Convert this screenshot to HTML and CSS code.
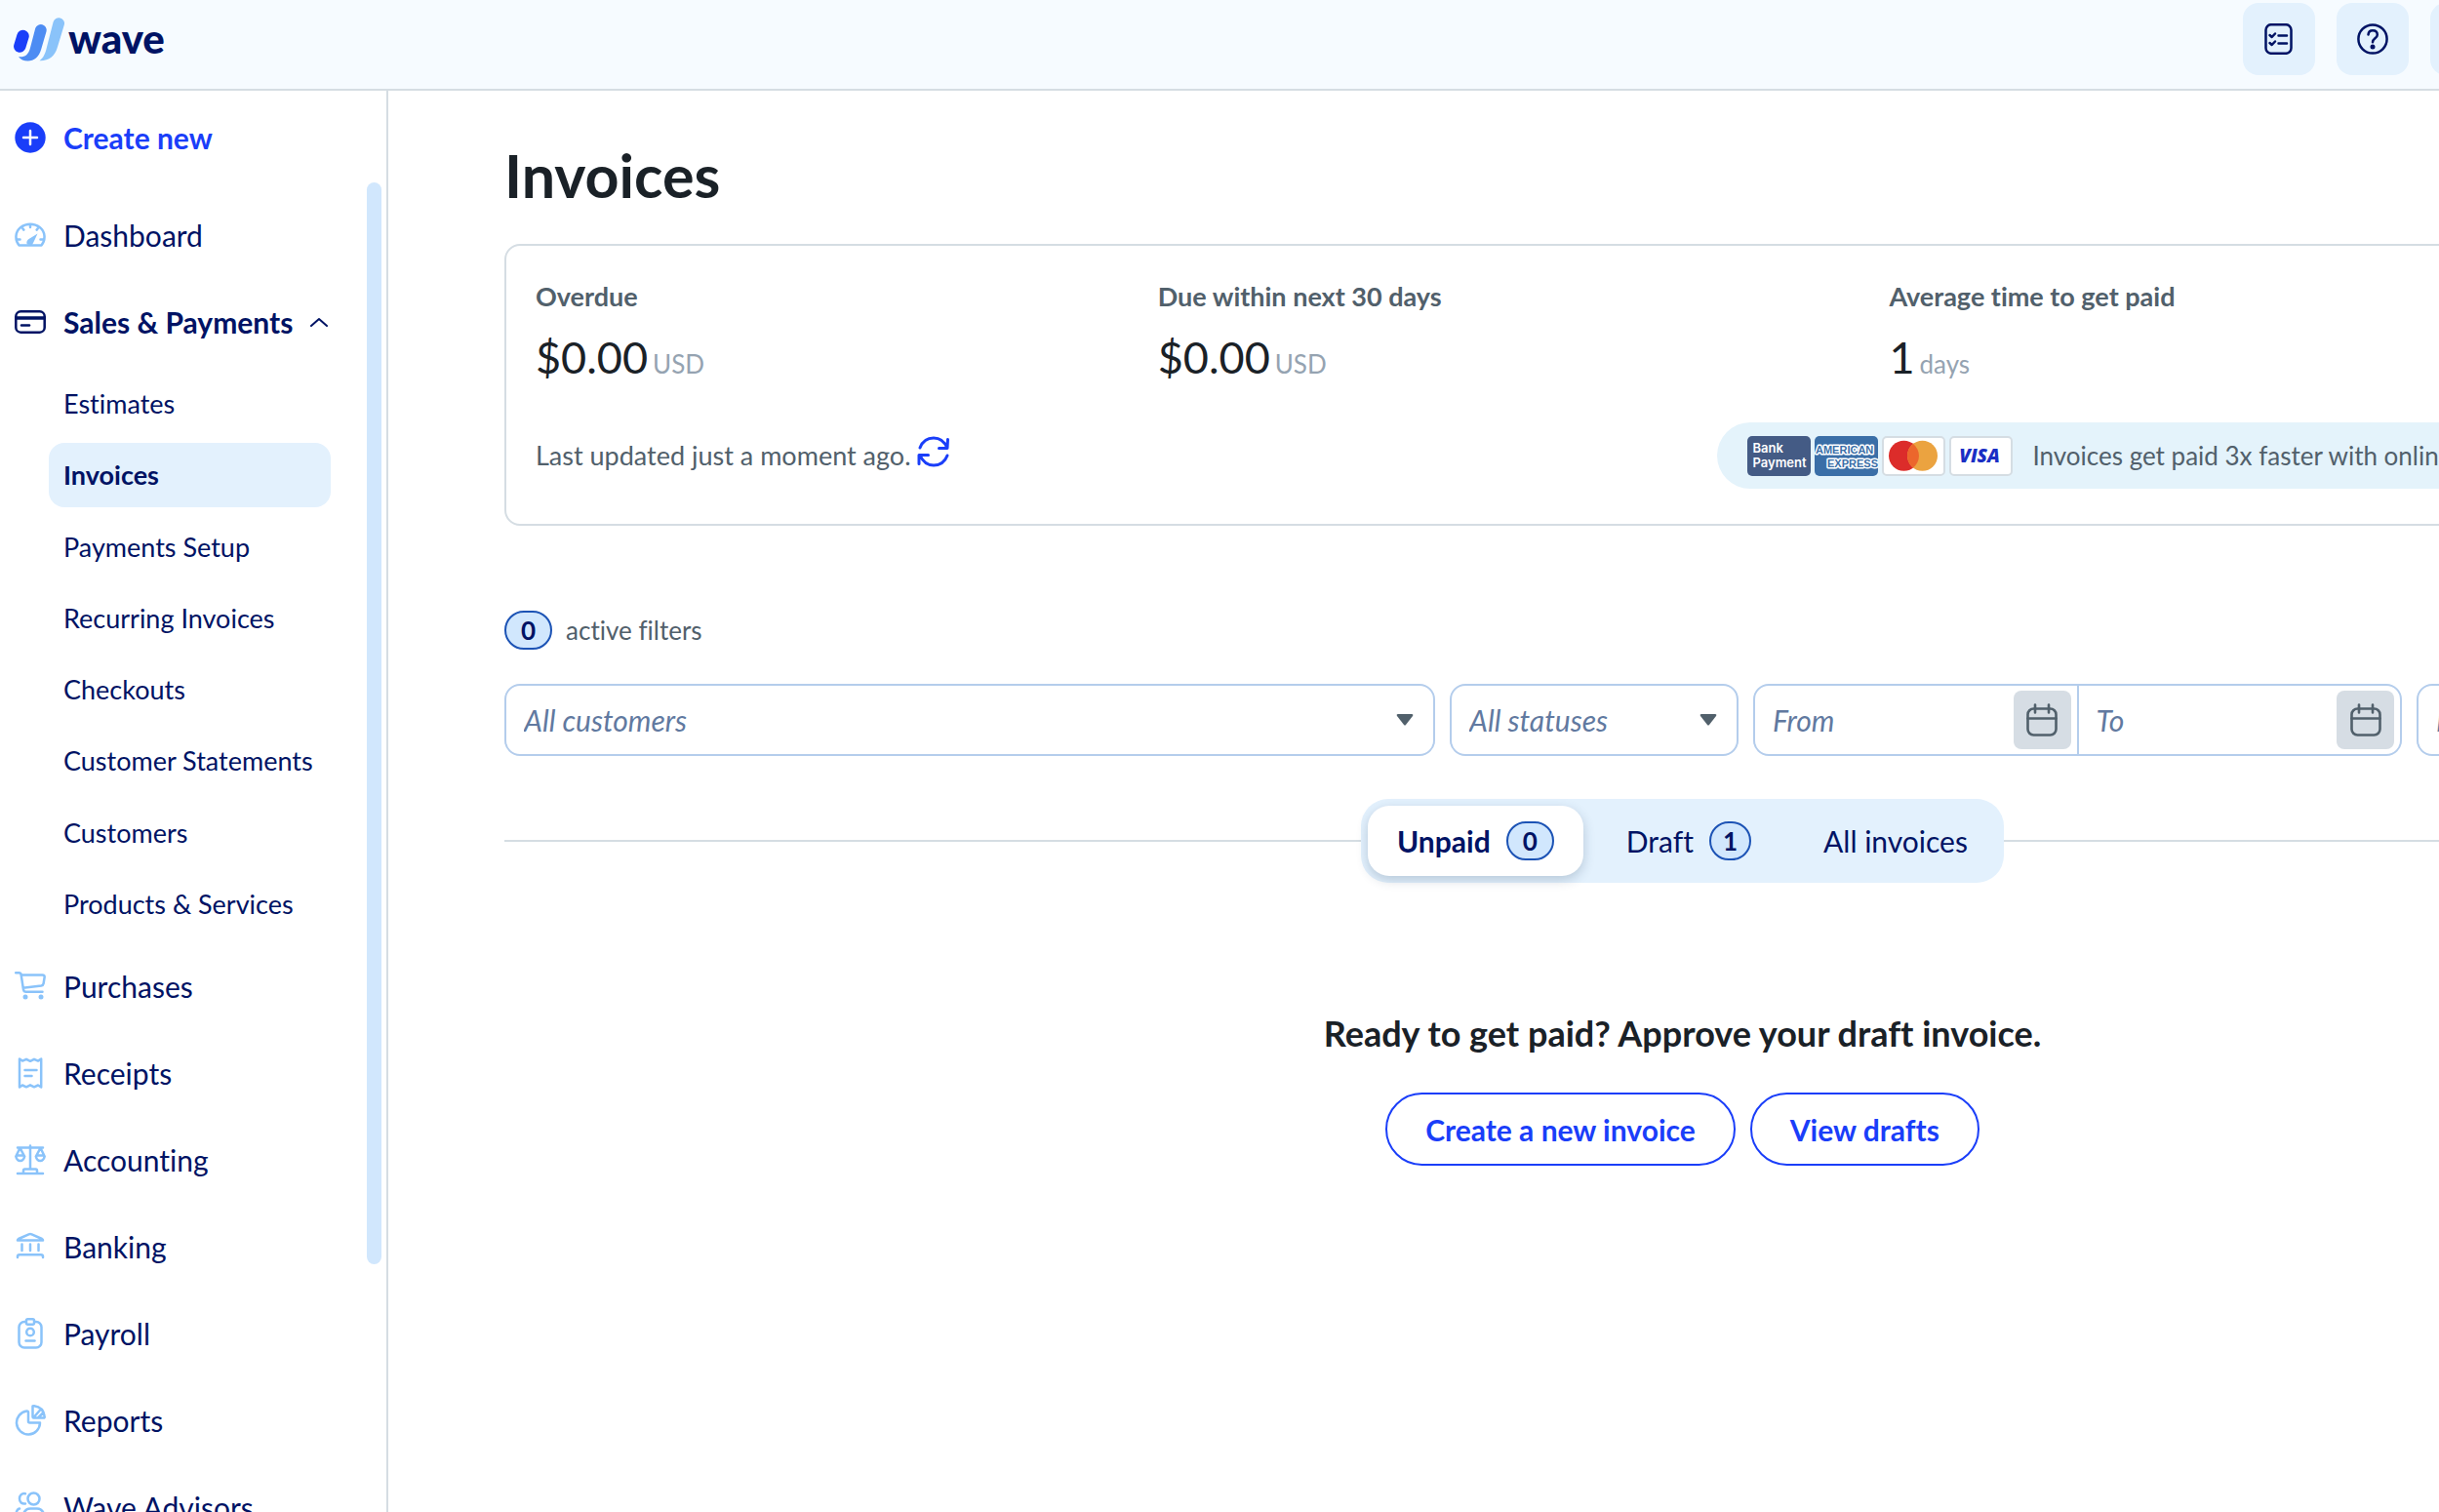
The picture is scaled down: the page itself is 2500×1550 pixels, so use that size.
FILE: index.html
```html
<!DOCTYPE html>
<html lang="en">
<head>
<meta charset="utf-8">
<meta name="viewport" content="width=device-width, initial-scale=1">
<title>Invoices - Wave</title>
<link rel="stylesheet" href="styles.css">
</head>
<body>
<div class="app">
  <header class="topbar">
    <a class="brand" href="#">
      <svg class="brand-mark" viewBox="0 0 54 46" aria-hidden="true">
        <path d="M9.500 20L6.300 30.500" stroke="#1a3ef9" stroke-width="12.500" stroke-linecap="round" fill="none"/>
        <path d="M22.300 11.800a5.900 5.900 0 0 1 11.300 3.200L28.200 33.500C26 41.500 21 45.500 14.500 45.500C10.500 45.500 7 44 5 41.200C11 42 15.200 39.500 17 32Z" fill="#4d8cf3"/>
        <path d="M40.600 5.400a5.800 5.800 0 0 1 11.200 3.200L45 31C42.200 41 36 45.500 26.500 45.200C30.500 42.500 32.400 38 33.800 32Z" fill="#8ac3fa"/>
      </svg>
      <span class="brand-name">wave</span>
    </a>
    <div class="top-actions">
      <button class="top-button" type="button" aria-label="Checklist">
        <svg viewBox="0 0 32 32" aria-hidden="true"><rect x="2.500" y="1.200" width="26" height="29.600" rx="5.500"/><path d="M6.500 12l2.200 2L12 10.500M15.500 12.500H24M6.500 20l2.200 2L12 18.500M15.500 20.500H24"/></svg>
      </button>
      <button class="top-button" type="button" aria-label="Help">
        <svg viewBox="0 0 32 32" aria-hidden="true"><circle cx="16" cy="16" r="14.600"/><path d="M11.500 11.500C11.800 8.700 13.600 7.300 16 7.300C18.900 7.300 20.800 9 20.800 11.700C20.800 15.200 16 15.500 16 19.200"/><circle class="dot" cx="16" cy="24" r="2.500"/></svg>
      </button>
      <button class="top-button" type="button" aria-label="Notifications"></button>
    </div>
  </header>

  <div class="body">
    <nav class="sidebar" aria-label="Main">
      <button class="nav-row create" type="button">
        <svg viewBox="0 0 32 32" aria-hidden="true"><circle cx="16" cy="16" r="15.700" fill="#1a3ef9" stroke="none"/><path d="M16 9v14M9 16h14" stroke="#fff"/></svg>
        <span>Create new</span>
      </button>
      <div class="nav-scroll">
        <div class="nav-list">
          <a class="nav-row" href="#">
            <svg viewBox="0 0 32 32" aria-hidden="true"><path d="M4.500 26.500C0 21 0.500 12.500 6 8.300C12 3.700 20 3.700 26 8.300C31.500 12.500 32 21 27.500 26.500Z"/><path d="M16 5.500v2.500M8.200 9.200l1.200 1.400M23.800 9.200l-1.200 1.400M3 20.500h2.500M29 20.500h-2.500"/><path class="solid" d="M13 25.500C11.500 23 13 21 15 19.700L23.500 14.500L19.300 23.500C18.500 25 18 26 17.500 26.500Z"/></svg>
            <span>Dashboard</span>
          </a>
          <a class="nav-row current" href="#" aria-expanded="true">
            <svg viewBox="0 0 32 32" aria-hidden="true"><rect x="1.300" y="5.300" width="29.400" height="21.400" rx="5"/><path d="M1.500 12h29" stroke-width="3.500"/><path d="M7 19.500h8"/></svg>
            <span>Sales &amp; Payments</span>
            <svg class="caret" viewBox="0 0 18 10" aria-hidden="true"><path d="M1 9L9 2l8 7"/></svg>
          </a>
          <ul class="subnav">
            <li><a href="#">Estimates</a></li>
            <li><a class="selected" href="#" aria-current="page">Invoices</a></li>
            <li><a href="#">Payments Setup</a></li>
            <li><a href="#">Recurring Invoices</a></li>
            <li><a href="#">Checkouts</a></li>
            <li><a href="#">Customer Statements</a></li>
            <li><a href="#">Customers</a></li>
            <li><a href="#">Products &amp; Services</a></li>
          </ul>
          <a class="nav-row" href="#">
            <svg viewBox="0 0 32 32" aria-hidden="true"><path d="M1.200 2.200H4.500Q6.300 2.200 6.600 4L9 19.500Q9.400 21.800 11.500 21.800H28.500M6.800 4.500H28.500Q31 4.500 30.600 7L29.600 13.300Q29.300 15.200 27.300 15.500L8.600 17.700"/><circle class="dot" cx="11" cy="27" r="2.500"/><circle class="dot" cx="27" cy="27" r="2.500"/></svg>
            <span>Purchases</span>
          </a>
          <a class="nav-row" href="#">
            <svg viewBox="0 0 32 32" aria-hidden="true"><path d="M5 1.500V30.500L8 28.500L12 30.300L16 28.300L20 30.300L24 28.500L27.200 30.500V1.500L24 3.600L20 1.800L16 3.800L12 1.800L8 3.600ZM10.500 13h12M10.500 19h7"/></svg>
            <span>Receipts</span>
          </a>
          <a class="nav-row" href="#">
            <svg viewBox="0 0 32 32" aria-hidden="true"><path d="M16 1.500V25M3 3.500H29M3 30H29M9 29.500V27Q9 25.500 10.500 25.500H21.500Q23 25.500 23 27V29.500M5.500 3.800L1.300 12.500C2 15.500 3.500 17 5.700 17S9.500 15.500 10.200 12.500ZM2 11.500h7.500M26.500 3.800L21.800 12.500C22.500 15.500 24 17 26.200 17S30 15.500 30.700 12.500ZM22.500 11.500h7.500"/></svg>
            <span>Accounting</span>
          </a>
          <a class="nav-row" href="#">
            <svg viewBox="0 0 32 32" aria-hidden="true"><path d="M3 9.500Q3 8.500 4 8L14.500 3.300Q16 2.700 17.500 3.300L28 8Q29 8.500 29 9.500ZM7.500 13.500V20M16 13.500V20M24.500 13.500V20M3 27V26Q3 24.300 5 24.300H27Q29 24.300 29 26V27"/></svg>
            <span>Banking</span>
          </a>
          <a class="nav-row" href="#">
            <svg viewBox="0 0 32 32" aria-hidden="true"><rect x="4.500" y="4" width="23" height="26.500" rx="5.500"/><rect class="blank" x="12" y="1.300" width="8" height="5.500" rx="1.500"/><circle cx="16" cy="14.500" r="3.800"/><path d="M11.500 23.500h9"/></svg>
            <span>Payroll</span>
          </a>
          <a class="nav-row" href="#">
            <svg viewBox="0 0 32 32" aria-hidden="true"><path d="M12.500 6.500A12 12 0 1 0 26 18.500H15.500Q14 18.500 14 17V7.800Q14 6.500 12.500 6.500ZM18.500 1.500V12.500Q18.500 13.500 19.500 13.500H29.500Q31 13.500 30.700 12C29.800 6 26 2 20 1.300Q18.500 1.200 18.500 2.500M20 12.500L26.500 5M24.500 13l4.500-4.500"/></svg>
            <span>Reports</span>
          </a>
          <a class="nav-row" href="#">
            <svg viewBox="0 0 32 32" aria-hidden="true"><circle cx="19.500" cy="7.500" r="6"/><path d="M11 2.200C7.500 1.300 5 4 5 7.500S7.500 13 11 12.500M8 31C8 22 11 17.500 16 17.500H23C28 17.500 31 22 31 31ZM1.300 26C1.300 21 2.500 18 5 17.500"/></svg>
            <span>Wave Advisors</span>
          </a>
        </div>
        <div class="scroll-thumb"></div>
      </div>
    </nav>

    <main class="content">
      <h1>Invoices</h1>

      <section class="summary" aria-label="Summary">
        <dl class="stats">
          <div><dt>Overdue</dt><dd>$0.00 <small>USD</small></dd></div>
          <div><dt>Due within next 30 days</dt><dd>$0.00 <small>USD</small></dd></div>
          <div><dt>Average time to get paid</dt><dd>1 <small>days</small></dd></div>
        </dl>
        <div class="summary-foot">
          <div class="updated">
            <span>Last updated just a moment ago.</span>
            <button class="refresh" type="button" aria-label="Refresh">
              <svg viewBox="0 0 34 32" aria-hidden="true"><path d="M3 12C5.500 5.500 10.500 2 17 2C23.500 2 28 5.500 30.800 12M31.500 3.500L31 12.500H22.500M31 20C28.500 26.500 23.500 30 17 30C10.500 30 6 26.500 3.200 20M2 28.500V19.500H11.500"/></svg>
            </button>
          </div>
          <div class="promo">
            <div class="methods">
              <span class="method bank">Bank<br>Payment</span>
              <svg class="method amex" viewBox="0 0 65 41" role="img" aria-label="American Express"><text x="1" y="18">AMERICAN</text><text x="13" y="32">EXPRESS</text></svg>
              <svg class="method plain" viewBox="2 2 61 37" role="img" aria-label="Mastercard"><circle cx="22.500" cy="20.300" r="15.500" fill="#dc2c2a"/><circle cx="41.500" cy="20.300" r="15.500" fill="#eba340"/><path d="M32 8.100a15.500 15.500 0 0 1 0 24.400a15.500 15.500 0 0 1 0-24.400" fill="#ec662c"/></svg>
              <svg class="method plain visa" viewBox="2 2 61 37" role="img" aria-label="Visa"><text x="31" y="27" text-anchor="middle">VISA</text></svg>
            </div>
            <span class="promo-text">Invoices get paid 3x faster with online payments</span>
          </div>
        </div>
      </section>

      <div class="active-filters"><span class="badge">0</span><span>active filters</span></div>

      <form class="filters">
        <select class="field customers" aria-label="Customer"><option>All customers</option></select>
        <select class="field statuses" aria-label="Status"><option>All statuses</option></select>
        <div class="field dates">
          <div class="date"><input type="text" placeholder="From" aria-label="From"><button type="button" aria-label="Pick start date"><svg viewBox="0 0 32 34" aria-hidden="true"><rect x="1.500" y="5.500" width="29" height="27" rx="6"/><path d="M1.500 15.500h29M9 1.500v8M23 1.500v8"/></svg></button></div>
          <div class="date"><input type="text" placeholder="To" aria-label="To"><button type="button" aria-label="Pick end date"><svg viewBox="0 0 32 34" aria-hidden="true"><rect x="1.500" y="5.500" width="29" height="27" rx="6"/><path d="M1.500 15.500h29M9 1.500v8M23 1.500v8"/></svg></button></div>
        </div>
        <input class="field search" type="text" placeholder="Enter invoice #" aria-label="Invoice number">
      </form>

      <div class="tab-row">
        <div class="tabs" role="tablist">
          <button class="tab active" type="button" role="tab" aria-selected="true">Unpaid <span class="badge">0</span></button>
          <button class="tab" type="button" role="tab" aria-selected="false">Draft <span class="badge narrow">1</span></button>
          <button class="tab" type="button" role="tab" aria-selected="false">All invoices</button>
        </div>
      </div>

      <section class="empty">
        <h2>Ready to get paid? Approve your draft invoice.</h2>
        <div class="empty-actions">
          <button class="outline" type="button">Create a new invoice</button>
          <button class="outline" type="button">View drafts</button>
        </div>
      </section>
    </main>
  </div>
</div>
</body>
</html>
```
FILE: styles.css
```css
:root {
  --navy: #001364;
  --blue: #1a3ef9;
  --sky: #8ac3fa;
  --pale: #e3f1fd;
  --badge: #d1e7fd;
  --line: #d5dde3;
  --field: #b4cdec;
  --ink: #1a2127;
  --slate: #51606b;
}

* { box-sizing: border-box; }

body {
  margin: 0;
  background: #fff;
  color: var(--navy);
  font: 30px/40px Lato, "Noto Sans", sans-serif;
  font-variant-ligatures: none;
}

button, input, select { font: inherit; color: inherit; margin: 0; }
button { border: 0; padding: 0; background: none; cursor: pointer; }
a { color: inherit; text-decoration: none; }
svg { fill: none; stroke-linecap: round; stroke-linejoin: round; }

.app {
  height: 100vh;
  display: flex;
  flex-direction: column;
  overflow: hidden;
}

/* Top bar */
.topbar {
  flex: none;
  display: flex;
  align-items: center;
  justify-content: space-between;
  padding: 3px 0 14px 14px;
  margin-right: -65px;
  background: #f6fbff;
  border-bottom: 2px solid var(--line);
}
.brand { display: flex; align-items: flex-start; gap: 2px; }
.brand-mark { width: 54px; height: 46px; }
.brand-name { font-size: 42px; line-height: 44px; font-weight: 900; }
.top-actions { display: flex; gap: 22px; }
.top-button {
  display: grid;
  place-items: center;
  width: 74px;
  height: 74px;
  border-radius: 16px;
  background: var(--pale);
}
.top-button svg { width: 32px; height: 32px; stroke: var(--navy); stroke-width: 2.500; }
.dot { fill: var(--navy); stroke: none; }

.body { flex: 1; min-height: 0; display: flex; }

/* Sidebar */
.sidebar {
  flex: none;
  width: 398px;
  display: flex;
  flex-direction: column;
  border-right: 2px solid var(--line);
}
.nav-row {
  flex: none;
  display: flex;
  align-items: center;
  gap: 18px;
  height: 89px;
  padding-left: 15px;
  text-align: left;
}
.nav-row svg { width: 32px; height: 32px; stroke: var(--sky); stroke-width: 2.500; }
.nav-row .dot, .nav-row .solid { fill: var(--sky); stroke: none; }
.nav-row .blank { fill: #fff; }
.create { height: 94px; padding-top: 2px; color: var(--blue); font-weight: 700; }
.current { font-weight: 700; }
.nav-row.current svg { stroke: var(--navy); }
.nav-row .caret { width: 18px; height: 10px; stroke-width: 2; }
.nav-scroll { flex: 1; min-height: 0; display: flex; gap: 37px; padding-right: 5px; }
.nav-list { flex: 1; padding-top: 9px; overflow: hidden; }
.scroll-thumb {
  width: 15px;
  margin-bottom: 254px;
  border-radius: 8px;
  background: var(--badge);
}
.subnav {
  display: flex;
  flex-direction: column;
  justify-content: space-between;
  height: 579px;
  margin: 7px 0 6px;
  padding: 0 0 0 50px;
  list-style: none;
}
.subnav a {
  display: block;
  padding: 13px 15px;
  border-radius: 16px;
  font-size: 27px;
}
.subnav .selected { background: var(--pale); font-weight: 700; }

/* Page content */
.content {
  flex: 1;
  min-width: 0;
  margin-right: -432px;
  padding: 47px 0 0 119px;
}
h1 { margin: 0; color: var(--ink); font-size: 61px; line-height: 80px; font-weight: 700; }

.summary {
  margin-top: 30px;
  padding: 32px 30px 36px;
  border: 2px solid var(--line);
  border-radius: 16px;
  color: var(--slate);
  font-size: 27px;
}
.stats { display: grid; grid-template-columns: 638fr 750fr 964fr; margin: 0; }
dt { font-weight: 700; }
dd {
  display: flex;
  align-items: baseline;
  gap: 5px;
  margin: 18px 0 0;
  color: var(--ink);
  font-size: 45px;
  line-height: 48px;
}
small { color: #95a3b1; font-size: 26px; }
.summary-foot { display: grid; grid-template-columns: 1212fr 1140fr; align-items: center; margin-top: 36px; }
.updated { display: flex; align-items: flex-start; gap: 6px; }
.refresh { display: grid; }
.refresh svg { width: 34px; height: 32px; stroke: var(--blue); stroke-width: 3; }
.promo {
  display: flex;
  align-items: center;
  gap: 20px;
  height: 68px;
  padding-left: 31px;
  border-radius: 34px;
  background: #e4f3fb;
  font-size: 26px;
}
.methods { display: flex; gap: 4px; }
.method { width: 65px; height: 41px; border-radius: 5px; }
.bank {
  padding: 5px 5px;
  background: #445b85;
  color: #fff;
  font: 600 13px/15px Inter, sans-serif;
}
.amex { background: #3a6ea7; overflow: hidden; }
.amex text {
  fill: #3a6ea7;
  stroke: #fff;
  stroke-width: 3;
  paint-order: stroke;
  font: 700 11px "Liberation Sans", sans-serif;
}
.plain { background: #fff; border: 2px solid var(--line); }
.visa text { fill: #1a2fc4; font: italic 900 19px "Open Sans", sans-serif; }
.promo-text { white-space: nowrap; }

/* Filters */
.active-filters {
  display: flex;
  align-items: center;
  gap: 14px;
  margin-top: 87px;
  color: var(--slate);
  font-size: 26px;
}
.badge {
  display: inline-block;
  padding: 0 15px;
  border: 2px solid #1c53b5;
  border-radius: 20px;
  background: var(--badge);
  color: var(--navy);
  font-size: 26px;
  line-height: 36px;
  font-weight: 700;
  text-align: center;
}
.badge.narrow { padding: 0 12px; }
.filters { display: flex; gap: 15px; margin-top: 35px; }
.field {
  height: 74px;
  border: 2px solid var(--field);
  border-radius: 16px;
  background: #fff;
}
select.field, .filters input { color: #6179a0; font-style: italic; }
::placeholder { color: #6179a0; opacity: 1; }
select.field {
  appearance: none;
  padding: 0 18px;
  background: #fff url("data:image/svg+xml,%3Csvg xmlns='http://www.w3.org/2000/svg' viewBox='0 0 18 14'%3E%3Cpath d='M2 1h14q2 0 1 2l-7 9q-1 1-2 0L1 3q-1-2 1-2z' fill='%2351606b'/%3E%3C/svg%3E") no-repeat right 20px center / 18px 14px;
}
.customers { flex: 1; }
.statuses { flex: none; width: 296px; }
.dates { flex: none; display: flex; width: 665px; }
.date { flex: 1; min-width: 0; display: flex; align-items: center; padding: 0 6px 0 18px; }
.date + .date { border-left: 2px solid var(--field); }
.date input { flex: 1; min-width: 0; padding: 0; border: 0; background: none; }
.date button {
  flex: none;
  display: grid;
  place-items: center;
  width: 59px;
  height: 60px;
  border-radius: 8px;
  background: #d6dde4;
}
.date svg { width: 32px; height: 34px; stroke: var(--slate); stroke-width: 2.600; }
.search { flex: none; width: 455px; padding: 0 18px; }

/* Tabs */
.tab-row { display: flex; align-items: center; margin-top: 44px; }
.tab-row::before, .tab-row::after { content: ""; flex: 1; height: 2px; background: var(--line); }
.tabs {
  display: flex;
  gap: 14px;
  padding: 7px;
  border-radius: 28px;
  background: var(--pale);
}
.tab { display: flex; align-items: center; gap: 16px; height: 72px; padding: 0 30px; border-radius: 22px; }
.tab.active {
  background: #fff;
  box-shadow: 0 4px 12px rgba(40, 70, 100, .24);
  font-weight: 700;
}

/* Empty state */
.empty { margin-top: 130px; text-align: center; }
h2 { margin: 0; color: var(--ink); font-size: 36px; line-height: 48px; font-weight: 700; }
.empty-actions { display: flex; justify-content: center; gap: 15px; margin-top: 37px; }
.outline {
  height: 75px;
  padding: 0 39px;
  border: 2px solid var(--blue);
  border-radius: 38px;
  color: var(--blue);
  font-weight: 700;
}
```
